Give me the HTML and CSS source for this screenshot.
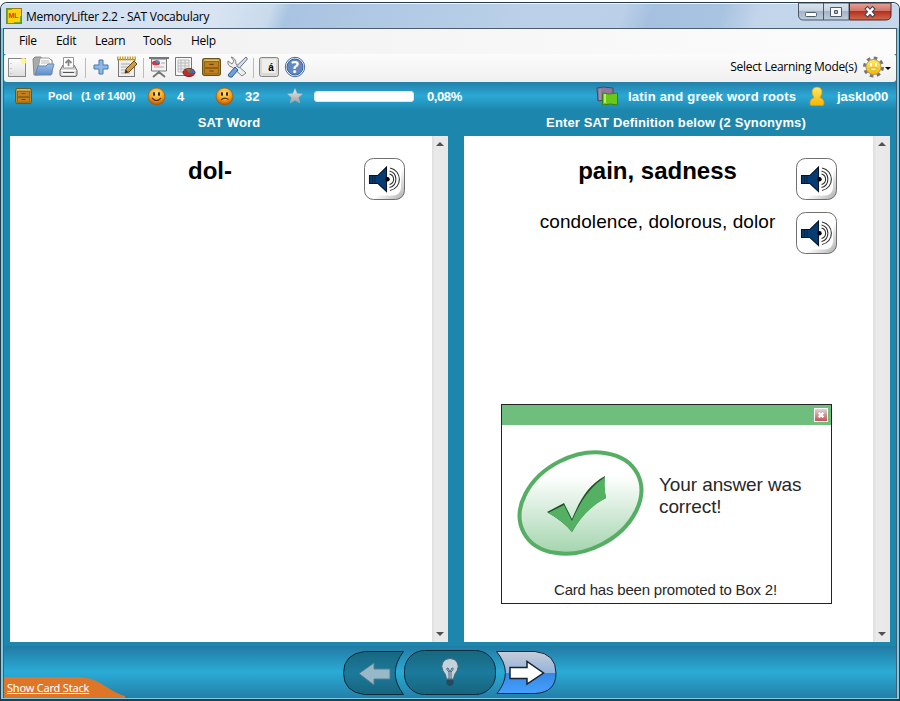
FILE: index.html
```html
<!DOCTYPE html>
<html lang="en">
<head>
<meta charset="utf-8">
<title>MemoryLifter 2.2 - SAT Vocabulary</title>
<link rel="stylesheet" href="styles.css">
</head>
<body>
<svg width="0" height="0" class="defs">
  <defs>
    <linearGradient id="paper" x2="0" y2="1"><stop stop-color="#fff"/><stop offset="1" stop-color="#ddd"/></linearGradient>
    <linearGradient id="blue" x2="0" y2="1"><stop stop-color="#9fc0e8"/><stop offset="1" stop-color="#5f8cc8"/></linearGradient>
    <radialGradient id="face" cy=".3" r=".65"><stop stop-color="#ffe070"/><stop offset=".6" stop-color="#f9a51e"/><stop offset="1" stop-color="#c05a04"/></radialGradient>
    <linearGradient id="btn" x2="1" y2="1"><stop offset=".6" stop-color="#fff"/><stop offset="1" stop-color="#aaa"/></linearGradient>
    <linearGradient id="oval" gradientUnits="userSpaceOnUse" x1="64" y1="0" x2="64" y2="110" gradientTransform="rotate(27 64.5 55)"><stop offset=".25" stop-color="#fff"/><stop offset="1" stop-color="#9ed2a9"/></linearGradient>
    <linearGradient id="dark" x2="0" y2="1"><stop stop-color="#17677f"/><stop offset=".5" stop-color="#1b7a9c"/><stop offset="1" stop-color="#17647d"/></linearGradient>
    <linearGradient id="next" x2="0" y2="1"><stop stop-color="#c9ccd8"/><stop offset=".5" stop-color="#92b4dd"/><stop offset=".52" stop-color="#3688e2"/><stop offset="1" stop-color="#45a0ff"/></linearGradient>
    <linearGradient id="star" x2="0" y2="1"><stop stop-color="#ececec"/><stop offset="1" stop-color="#a0a0a0"/></linearGradient>
    <linearGradient id="gold" x2="0" y2="1"><stop stop-color="#ffe96a"/><stop offset="1" stop-color="#f8b400"/></linearGradient>
    <symbol id="drawer" viewBox="0 0 18 18">
      <rect x=".5" y="1" width="17" height="16" rx="2" fill="#b98b2e" stroke="#665317"/>
      <path d="M2 2.500h14" stroke="#e8d48c"/>
      <rect x="2.500" y="4" width="13" height="5.500" fill="#c4801c" stroke="#8a5a12" stroke-width=".8"/>
      <rect x="2.500" y="10.500" width="13" height="5" fill="#c4801c" stroke="#8a5a12" stroke-width=".8"/>
      <path d="M7 6h4v1H7zM7 12.300h4v1H7z" fill="#684006"/>
    </symbol>
    <symbol id="speaker" viewBox="0 0 42 43">
      <rect x=".5" y=".5" width="40" height="41" rx="9" fill="url(#btn)" stroke="#606060" stroke-width=".9"/>
      <rect x="2" y="2" width="35" height="35.500" rx="8" fill="#fff"/>
      <path d="M5.500 17.500h8.500l8.500-8.500v24.500L14 25.500H5.500z" fill="#063c74" stroke="#051426" stroke-width="1.100"/>
      <path d="M8.500 18v7M11 18v7" stroke="#03213f" stroke-width=".8"/>
      <circle cx="23.500" cy="21.300" r="2.200" fill="#000"/>
      <path d="M25.500 16c5.500 1.500 5.500 9 0 10.500M25.500 13c8.500 2 8.500 14.500 0 16.500M26 10c12.500 2.500 12.500 20 0 22.500" fill="none" stroke="#333" stroke-width="1.100"/>
    </symbol>
  </defs>
</svg>
<div class="window">
  <header class="titlebar">
    <svg class="app-icon" width="16" height="16"><rect x=".5" y=".5" width="15" height="15" fill="#ffd20a" stroke="#a87808"/><path d="M1 15V1h5M15 8v7H8" fill="none" stroke="#4a9c38" stroke-width="1.500"/><text x="2.500" y="9.500" class="logo-text">ML</text></svg>
    <h1 class="title">MemoryLifter 2.2 - SAT Vocabulary</h1>
    <div class="controls">
      <svg width="95" height="18">
        <defs><linearGradient id="cap" x2="0" y2="1"><stop stop-color="#dce6f1"/><stop offset=".48" stop-color="#c6d1e0"/><stop offset=".5" stop-color="#a5b3c7"/><stop offset="1" stop-color="#bdcede"/></linearGradient><linearGradient id="red" x2="0" y2="1"><stop stop-color="#e7a397"/><stop offset=".48" stop-color="#d07362"/><stop offset=".5" stop-color="#b33020"/><stop offset="1" stop-color="#d06c4c"/></linearGradient></defs>
        <path d="M.5 0V12q0 5 5 5H51V0z" fill="url(#cap)" stroke="#4b5868"/>
        <path d="M51.500 0V17H88q5 0 5-5V0z" fill="url(#red)" stroke="#5b2326"/>
        <path d="M25.500 0v17" stroke="#4b5868"/>
        <rect x="7.500" y="9.500" width="11" height="4" rx="1" fill="#fff" stroke="#505a68"/>
        <path d="M32.500 4.500h11v9h-11zM36.500 7.500h3v3h-3z" fill="#f6f8fa" stroke="#505a68" fill-rule="evenodd"/>
        <path d="M69.500 6l5 5.500m0-5.500l-5 5.500" stroke="#474152" stroke-width="4.500" stroke-linecap="square"/><path d="M69.500 6l5 5.500m0-5.500l-5 5.500" stroke="#fff" stroke-width="2.500" stroke-linecap="square"/>
      </svg>
    </div>
  </header>
  <div class="client">
    <nav class="menu"><span>File</span><span>Edit</span><span>Learn</span><span>Tools</span><span>Help</span></nav>
    <div class="toolbar">
      <svg width="20" height="24"><rect x="1.500" y="3.500" width="17" height="18" fill="url(#paper)" stroke="#888"/><path d="M4 8v12" stroke="#aaa" stroke-dasharray="1 4"/><circle cx="16.500" cy="6" r="3" fill="#fff48f" opacity=".9"/></svg>
      <svg width="24" height="24"><path d="M2 20L1 4l2-2h6l2 3h9v14z" fill="#aaa" stroke="#888"/><path d="M6 14L8 3h9l3 3v9z" fill="#fafafa" stroke="#999"/><path d="M9 6h8M9 8h9" stroke="#bbb"/><path d="M3 20l3-9h8l2-2h6l-3 11z" fill="url(#blue)" stroke="#6389b8"/></svg>
      <svg width="22" height="24"><path d="M2 15.500l3-5.500h11l3 5.500v4q0 2-2 2H4q-2 0-2-2z" fill="#d4d4d4" stroke="#666"/><path d="M5.500 13V2.500h10V13z" fill="#fff" stroke="#999"/><path d="M10.500 11V6M7.500 8l3-3 3 3" fill="none" stroke="#888" stroke-width="1.800"/><path d="M3 15.500h15M4 19h13" stroke="#fff" stroke-width="1.500"/><path d="M5 17.500h11" stroke="#555"/></svg>
      <i class="sep"></i>
      <svg width="20" height="24"><path d="M8 5h4v5h5v4h-5v5H8v-5H3v-4h5z" fill="#8fb8e6" stroke="#4577b4" stroke-width="1"/></svg>
      <svg width="24" height="24"><rect x="3.500" y="4.500" width="16" height="17" fill="#eee" stroke="#777"/><path d="M2 3.500h19" stroke="#c9a32c" stroke-width="4" stroke-dasharray="1.500 1"/><path d="M6 9h9M6 12h10M6 15h7M6 18h9" stroke="#aaa"/><path d="M10 18l1-4 8-8 3 3-8 8z" fill="#d79a3c" stroke="#654420"/><path d="M10 18l1-3 2 2z" fill="#222"/></svg>
      <i class="sep"></i>
      <svg width="22" height="24"><path d="M10 16v3m0-2l-6 5m6-5l6 5" stroke="#777" stroke-width="2"/><path d="M2.500 4h15v12h-15z" fill="#f3f3f3" stroke="#777"/><path d="M0 3h20" stroke="#777" stroke-width="2"/><ellipse cx="7" cy="8" rx="4" ry="2.500" fill="#c93a42"/><path d="M7 8V5q4 0 4 3z" fill="#6683ad"/><path d="M12 8h4M5 12h10" stroke="#aaa"/></svg>
      <svg width="23" height="24"><path d="M1.500 2.500h16v18h-16z" fill="#f8f8f8" stroke="#777"/><path d="M4 5h11v12H4zM7 5v12M11 5v12M4 8h11M4 11h11M4 14h11" fill="#eee" stroke="#bbb"/><ellipse cx="15" cy="17.500" rx="6" ry="4" fill="#c3292e" stroke="#75191b"/><path d="M15 18l-3-4q3-1 5 0z" fill="#5b8e30"/><path d="M15 18l2-4q4 1 4 4z" fill="#406fa8"/></svg>
      <svg width="19" height="23"><use href="#drawer" y="2" width="19" height="20"/></svg>
      <svg width="24" height="24"><path d="M5 2l3 4-2 3-4-3q-1 5 4 6l10 9 4-3-10-9q0-6-5-7z" fill="#eee" stroke="#838383"/><path d="M20 2l1.500 2-8 9-3-2z" fill="#d7dce4" stroke="#667891"/><path d="M9 12l3 3-6 7q-3 1-4-2z" fill="#709fda" stroke="#285b9c"/></svg>
      <i class="sep"></i>
      <svg width="22" height="24"><rect x="1.500" y="2.500" width="19" height="19" rx="2" fill="#d9dad6" stroke="#888"/><path d="M4 4h14v14H4z" fill="#eeefeb"/><text x="13" y="16" class="key-text">á</text></svg>
      <svg width="22" height="24"><circle cx="11" cy="12" r="9.700" fill="#f0f5fc" stroke="#4c6a9d"/><circle cx="11" cy="12" r="8" fill="#6188c3" stroke="#39639f"/><text x="11" y="18" class="help-text">?</text></svg>
      <span class="mode">Select Learning Mode(s)</span>
      <svg width="23" height="24"><circle cx="11.500" cy="12" r="9" fill="none" stroke="#777" stroke-width="3" stroke-dasharray="3.600 3.468"/><circle cx="11.500" cy="12" r="7.500" fill="url(#gold)" stroke="#b59a49"/><path d="M9 8v3.500M14 8v3.500" stroke="#fff" stroke-width="2"/><path d="M7.500 13q4 6 8 0z" fill="#fff4a0" stroke="#c9a91e" stroke-width=".8"/></svg>
      <i class="caret"></i>
    </div>
    <div class="status">
      <svg width="17" height="18"><use href="#drawer"/></svg>
      <span class="small pool">Pool</span><span class="small count">(1 of 1400)</span>
      <svg width="19" height="19"><circle cx="9.500" cy="9.500" r="8.500" fill="url(#face)" stroke="#9d5208" stroke-width=".6"/><ellipse cx="7" cy="7" rx=".9" ry="2"/><ellipse cx="12" cy="7" rx=".9" ry="2"/><path d="M5 11q4.500 5 9 0" fill="none" stroke="#57310a" stroke-width="1.200"/></svg>
      <span class="known">4</span>
      <svg width="19" height="19"><circle cx="9.500" cy="9.500" r="8.500" fill="url(#face)" stroke="#9d5208" stroke-width=".6"/><ellipse cx="7" cy="7" rx=".9" ry="2"/><ellipse cx="12" cy="7" rx=".9" ry="2"/><path d="M6 13q3.500-3.500 7.500-.5" fill="none" stroke="#57310a" stroke-width="1.200"/></svg>
      <span class="unknown">32</span>
      <svg width="16" height="16"><path d="M8 .5l2.200 5 5.300.4-4 3.600 1.300 5.500L8 12.200 3.200 15l1.300-5.500-4-3.600 5.300-.4z" fill="url(#star)" stroke="#a7b2bb" stroke-width=".5"/></svg>
      <span class="progress"></span>
      <span class="percent">0,08%</span>
      <svg width="24" height="21"><path d="M1 2l6-1 10 1v13l-7-1-8 1z" fill="#8f779b" stroke="#4e435e"/><path d="M4 3v11" stroke="#b5a1bd"/><path d="M6.500 7l7 1 8-1v12l-7-1-8 1z" fill="#69c916" stroke="#398212"/><path d="M9 8v9" stroke="#b1eb72" stroke-width="2"/></svg>
      <span class="chapter">latin and greek word roots</span>
      <svg width="16" height="21"><path d="M2.500 19.500q-1.800 0-1.500-3 .5-4 4-5-2.500-3-2-6.500.8-4 5-4t5 4q.5 3.500-2 6.500 3.500 1 4 5 .3 3-1.500 3z" fill="url(#gold)" stroke="#d69a06" stroke-width=".8"/></svg>
      <span class="user">jasklo00</span>
    </div>
    <div class="headings"><h2>SAT Word</h2><h2>Enter SAT Definition below (2 Synonyms)</h2></div>
    <main class="panes">
      <section class="pane left">
        <div class="card"><strong>dol-</strong></div>
        <div class="sounds"><svg width="42" height="43"><use href="#speaker"/></svg></div>
        <div class="scroll"><i></i><i class="down"></i></div>
      </section>
      <section class="pane right">
        <div class="card"><strong>pain, sadness</strong><p>condolence, dolorous, dolor</p></div>
        <div class="sounds"><svg width="42" height="43"><use href="#speaker"/></svg><svg width="42" height="43"><use href="#speaker"/></svg></div>
        <div class="scroll"><i></i><i class="down"></i></div>
        <div class="dialog">
          <div class="dialog-bar"><svg width="14" height="14"><defs><linearGradient id="close" x2="0" y2="1"><stop stop-color="#ddd"/><stop offset="1" stop-color="#c64b50"/></linearGradient></defs><rect x=".5" y=".5" width="13" height="13" fill="url(#close)" stroke="#fff"/><path d="M4.700 4.700l4.600 4.600m0-4.600L4.700 9.300" stroke="#fff" stroke-width="2.300"/></svg></div>
          <div class="result">
            <svg width="128" height="110"><ellipse cx="64.500" cy="55" rx="64" ry="46.500" transform="rotate(-27 64.500 55)" fill="url(#oval)" stroke="#56ae65" stroke-width="4"/><path d="M31 64l17-9 8 16C64 52 72 37 89 28q-2 11 1 22Q70 59 56 84 47 73 31 64z" fill="#234c2b"/><path d="M32 65l16-8 8 16C64 54 74 39 89 29q-1 12 1 21Q70 60 56 84 47 73 32 65z" fill="#54b164"/></svg>
            <p>Your answer was<br>correct!</p>
          </div>
          <div class="promotion">Card has been promoted to Box 2!</div>
        </div>
      </section>
    </main>
    <footer class="bottom">
      <div class="stack-tab"><svg width="122" height="21"><path d="M0 0h76q14 1 25 9 12 8 20 10v2H0z" fill="#df7627"/></svg><a>Show Card Stack</a></div>
      <svg class="navigation" width="215" height="50">
        <path d="M22.500 5.500H61.500Q45 27 61.500 48.500H22.500Q1.500 46 1.500 27T22.500 5.500z" fill="url(#dark)" stroke="#062a39"/>
        <path d="M17 27.500L32 17v6h16v10H32v6z" fill="#96b8c7" stroke="#577d91"/>
        <rect x="62.500" y="4.500" width="91" height="44" rx="20" fill="url(#dark)" stroke="#062a39"/>
        <path d="M104.500 33q-.5-5-3.500-8-2.500-5 0-9 2.500-3.500 7-3.500t7 3.500q2.500 4 0 9-3 3-3.500 8z" fill="#c3d3dd" stroke="#476879"/>
        <path d="M107 33v-7q-4-4-1-4l2 4 2-4q3 0-1 4v7" fill="none" stroke="#48687a"/>
        <path d="M104.500 34h7v4q-3.500 4-7 0z" fill="#224b60"/>
        <path d="M154.500 5.500H193q21 2 21 21.500T193 47.500H155q17-21-.5-42z" fill="url(#next)" stroke="#142433"/>
        <path d="M168 21.500h17v-6L201.500 27 185 38v-5.500h-17z" fill="#fff" stroke="#172332" stroke-width="1.500"/>
      </svg>
    </footer>
  </div>
</div>
</body>
</html>
```
FILE: styles.css
```css
* { box-sizing: border-box; }
body { margin: 0; width: 900px; height: 701px; overflow: hidden; background: #fff; font-family: "Liberation Sans", Arial, sans-serif; }
svg { display: block; flex: none; }
.defs { position: absolute; }
.window { height: 699px; margin-top: 2px; border: 1px solid #283b49; border-bottom-width: 2px; border-radius: 7px 7px 0 0; background: #75cde8; padding: 0 2px 1px; }
.titlebar { height: 25px; margin: 0 -2px; display: flex; padding: 4px 6px 0 5px; border-radius: 6px 6px 0 0; border-top: 1px solid #edf5fc; background: linear-gradient(110deg, #cfdff0 0, #d8e4f2 24%, #c9daec 30%, #a9c4e1 32%, #bcd1e9 60%, #bacfe8 69%, #a6c1df 72%, #a9c4e1 80%, #c3d5ea 84%, #c5d8ec 100%); }
.title { flex: 1; margin: 0 0 0 4px; font: 12px/17px "Open Sans", sans-serif; letter-spacing: -.27px; }
.controls { margin-top: -5px; }
.client { height: 670px; border: solid #4a5d70; border-width: 1px 1px 0; display: flex; flex-direction: column; background: #1c86ac; overflow: hidden; }
.menu { height: 25px; flex: none; background: linear-gradient(90deg, #f0f0f0, #fcfcfc); display: grid; grid-template-columns: 37px 39px 48px 48px 50px; padding: 3px 0 0 15px; font: 12px/18px "Open Sans", sans-serif; letter-spacing: -.3px; }
.toolbar { height: 28px; flex: none; background: linear-gradient(#fcfcfc, #f0f0f0); display: grid; grid-template-columns: 25px 26px 27px 6px 24px 28px 6px 25px 28px 24px 27px 5px 26px 22px 1fr 24px 10px; padding: 1px 0 0 3px; border-radius: 3px; }
.sep { width: 1px; height: 20px; margin-top: 3px; background: #bbb; }
.logo-text { font: bold 7px "Liberation Sans", sans-serif; fill: #d93514; }
.key-text { font: bold 10px "Liberation Sans", sans-serif; text-anchor: middle; }
.help-text { font: bold 16px "Open Sans", sans-serif; fill: #fff; text-anchor: middle; }
.mode { justify-self: end; padding-right: 5px; font: 12px/23px "Open Sans", sans-serif; letter-spacing: -.27px; white-space: nowrap; }
.caret { border: 3px solid transparent; border-top-color: #000; margin: 12px 0 0 -1px; width: 6px; height: 6px; }
.status { height: 28px; flex: none; display: grid; grid-template-columns: 33px 33px 66px 30px 38px 29px 43px 26px 113px 170px 32px 181px 28px 59px; align-items: center; padding-left: 11px; color: #fff; background: linear-gradient(#237fa8, #2ba8d5 50%, #1d87ad); font: bold 13px "Liberation Sans", sans-serif; white-space: nowrap; }
.small { font-size: 11px; }
.pool { letter-spacing: .1px; }
.progress { width: 100px; height: 11px; border: 1px solid #dce9ef; border-radius: 3px; background: #fff; }
.status > .progress, .status > .percent, .status > .unknown { position: relative; left: 1px; }
.percent { letter-spacing: -.4px; }
.chapter { letter-spacing: .22px; }
.headings { height: 26px; flex: none; display: grid; grid-template-columns: 438px 424px; column-gap: 16px; padding-left: 6px; color: #fff; text-align: center; }
h2 { margin: 0; font: bold 13px/25px "Liberation Sans", sans-serif; letter-spacing: .13px; }
.panes { display: grid; grid-template-columns: 438px 426px; column-gap: 16px; padding-left: 6px; height: 506px; flex: none; }
.pane { display: grid; grid-template-columns: 1fr 68px 16px; background: #fff; position: relative; min-height: 0; }
.card { padding: 20px 0 0 46px; text-align: center; }
.right .card { padding-left: 45px; }
.card strong { display: block; font-size: 24px; line-height: 29px; }
.card p { margin: 27px -10px 0; font-size: 19px; line-height: 20px; letter-spacing: .08px; white-space: nowrap; }
.sounds { padding-top: 22px; display: flex; flex-direction: column; gap: 11px; }
.right { grid-template-columns: 342px 67px 17px; }
.right .sounds { margin-left: -10px; }
.scroll { background: linear-gradient(90deg, #dedede, #eaeaea 20%, #e8e8e8); display: flex; flex-direction: column; justify-content: space-between; align-items: center; padding: 6px 0; }
.scroll i { border: 4px solid transparent; border-top: 0; border-bottom-color: #505050; }
.scroll .down { border-bottom: 0; border-top: 4px solid #505050; }
.dialog { position: absolute; left: 37px; top: 268px; width: 331px; height: 200px; border: 1px solid #222; background: #fff; color: #282828; }
.dialog-bar { height: 20px; background: #70be7e; display: flex; justify-content: flex-end; padding: 3px 3px; }
.result { display: flex; height: 148px; padding: 23px 0 0 14px; gap: 15px; }
.result p { margin: 26px 0 0; font-size: 19px; line-height: 22px; letter-spacing: -.1px; white-space: nowrap; }
.promotion { text-align: center; font-size: 15px; line-height: 34px; letter-spacing: -.2px; padding-right: 2px; }
.bottom { height: 52px; margin-top: 4px; flex: none; position: relative; background: linear-gradient(#217ba4, #2aabd6 50%, #237fa8); display: flex; justify-content: center; align-items: flex-start; }
.stack-tab { position: absolute; left: 0; bottom: 0; color: #fff; }
.stack-tab a { position: absolute; left: 3px; top: 4px; font: 11px/14px "Noto Sans", sans-serif; letter-spacing: -.2px; text-decoration: underline; white-space: nowrap; }
.navigation { margin-left: -1px; }
```
